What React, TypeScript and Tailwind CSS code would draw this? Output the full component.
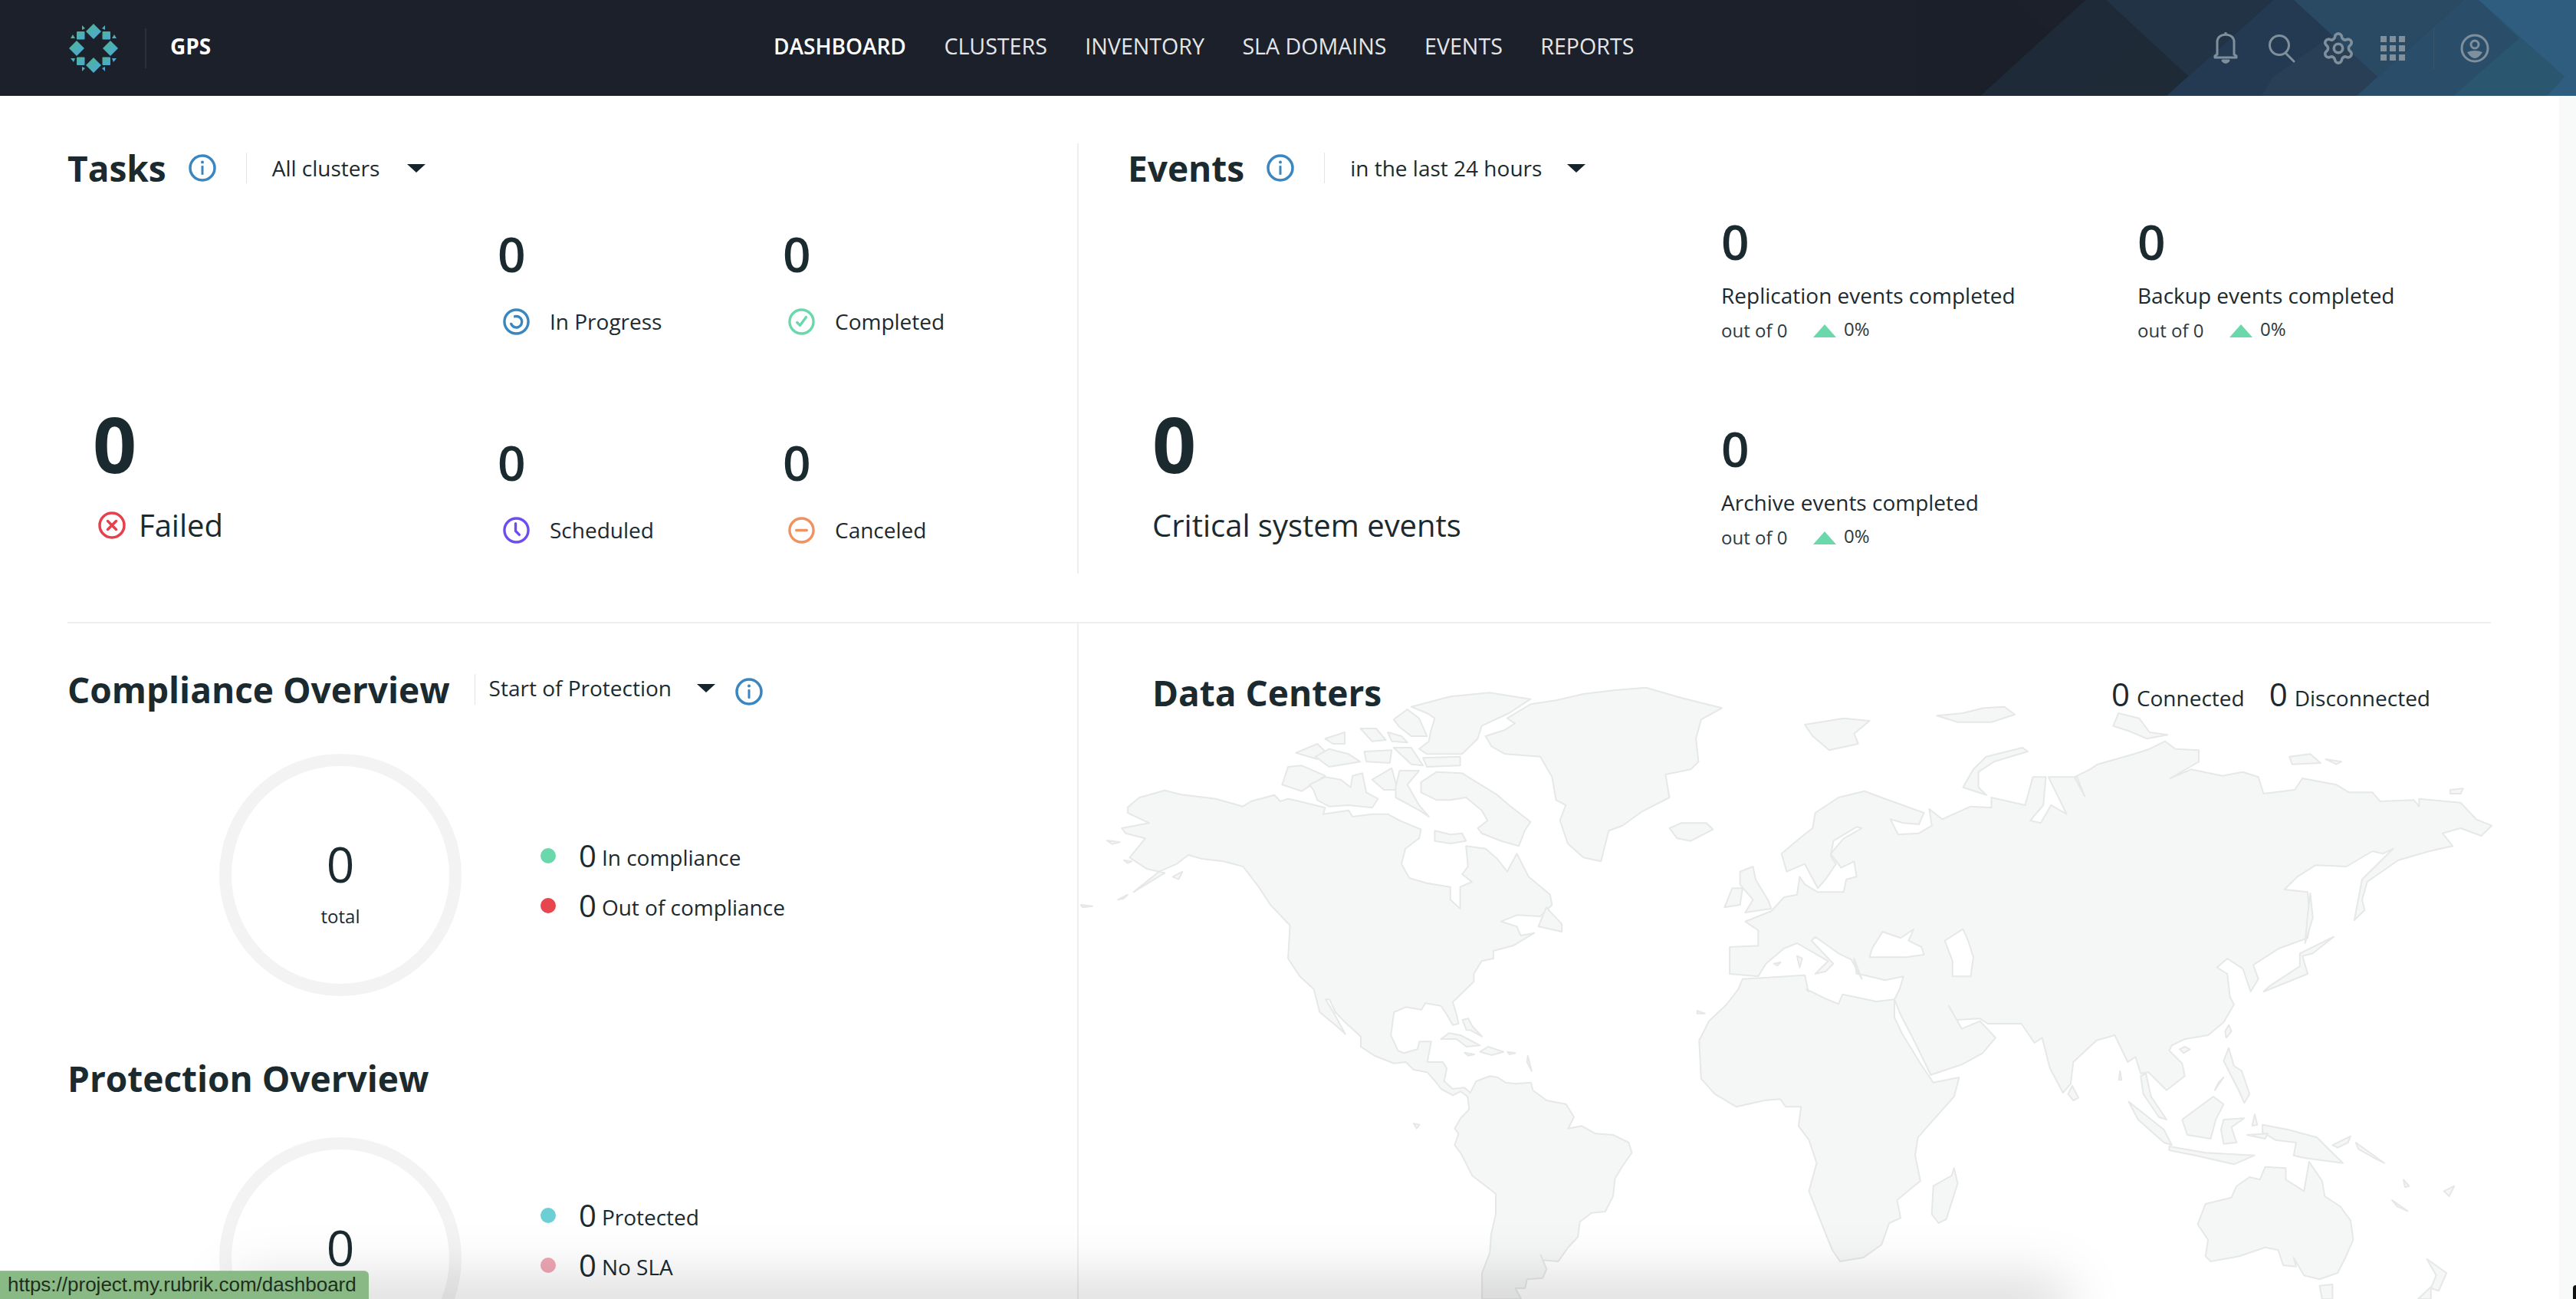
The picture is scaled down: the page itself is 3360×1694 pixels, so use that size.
import React from 'react';
import { Settings } from 'lucide-react';

// coastline points, traced per map quadrant: [left, top, x scale]
const QUADRANTS: { [key: string]: number[] } = {
  A: [1400, 880, 1.96],
  B: [2200, 880, 1.479],
  C: [1500, 1290, 1.96],
  D: [2300, 1290, 1.479],
};

const toPath = (shape: string) => {
  const points = shape.split('|').flatMap((part) => {
    const [left, top, sx] = QUADRANTS[part.trim()[0]];
    return part
      .trim()
      .slice(2)
      .trim()
      .split(/\s+/)
      .map((p) => {
        const [x, y] = p.split(',').map(Number);
        return `${(left + x / sx).toFixed(1)},${(top + y / 3).toFixed(1)}`;
      });
  });
  return `M${points.join(' L')} Z`;
};

const LAND = [
  // north and south america
  'A:135,518 165,480 230,452 270,468 360,485 430,515 450,495 510,470 525,495 545,485 560,490 640,520 635,545 700,530 710,555 760,545 800,545 830,570 885,605 880,640 845,680 835,740 855,795 900,815 960,830 960,880 985,915 985,830 1015,810 990,780 1005,750 1000,670 1050,680 1080,720 1105,770 1130,700 1160,790 1215,860 1220,900 1190,945 1130,940 1090,965 1130,985 1140,1020 1175,1010 1120,1060 1070,1080 1070,1110 1040,1120 1020,1170 1020,1200 980,1260 | C:770,50 780,100 785,135 770,140 755,100 740,65 700,55 690,80 650,70 620,90 612,180 630,240 645,250 680,235 685,205 715,205 705,285 745,285 755,310 748,360 770,390 800,385 815,405 830,360 865,340 885,345 905,365 930,370 970,365 975,395 1010,435 1060,450 1080,500 1065,545 1100,535 1135,565 1180,570 1220,600 1228,640 1205,690 1185,740 1180,810 1160,870 1125,875 1095,910 1090,970 1065,1010 1040,1065 1000,1060 995,1040 1010,1095 1000,1130 960,1135 955,1170 930,1170 945,1212 845,1212 845,1110 865,1030 868,960 880,880 880,800 820,730 790,640 775,610 785,565 775,545 790,505 812,470 808,420 790,400 770,415 740,390 725,360 705,325 670,315 650,285 620,290 570,260 535,225 535,185 495,130 470,90 455,40 445,40 465,90 495,175 470,140 430,90 415,0 | A:575,1180 545,1110 550,980 500,900 470,830 430,750 380,730 325,720 290,705 260,740 215,770 150,850 230,775 185,760 140,715 180,640 130,620 120,600 190,580 135,540',
  // greenland, iceland
  'A:1050,240 1100,215 1125,190 1105,170 1165,115 1230,100 1300,75 1380,60 1460,50 1550,90 | B:65,130 25,175 15,250 20,340 5,370 | A:1510,390 1520,480 1450,535 1400,590 1365,610 1345,730 1300,715 1260,660 1240,570 1255,510 1230,490 1220,400 1190,320 1100,310 1065,280',
  'A:1520,600 1550,580 | B:35,580 48,605 5,650 | A:1540,640',
  // arctic canada
  'A:885,420 925,380 990,385 1080,470 1110,510 1165,575 1150,610 1135,670 1090,650 1040,620 1030,600 1055,570 1040,530 1000,480 960,490 925,490 885,460',
  'A:545,360 580,355 640,395 580,455 530,430',
  'A:600,430 640,400 680,410 705,440 710,395 735,385 745,460 775,485 760,520 700,510 650,515 620,490 610,450',
  'A:760,410 810,365 825,450 790,450',
  'A:830,375 880,375 850,430 880,510 905,555 880,530 820,480 820,440',
  'A:565,305 620,270 640,300 620,330',
  'A:615,320 650,290 700,310 730,340 650,360',
  'A:740,300 810,295 805,345 745,340',
  'A:640,250 690,225 690,270 660,270',
  'A:730,210 770,210 795,255 760,260',
  'A:800,225 835,240 850,265 810,260',
  'A:815,285 860,285 890,355 860,350',
  'A:890,325 985,320 985,355 900,360',
  'A:860,125 960,85 1060,70 1165,95 1110,150 1040,200 1030,250 990,310 900,310 880,290 905,260 910,220 920,170 900,150',
  'A:815,175 850,135 880,170 900,240 860,240 830,205',
  'A:960,625 990,620 1000,650 960,660 920,650 920,610',
  'A:1205,910 1245,975 1245,1005 1185,985',
  // small islands of the americas
  'A:15,900 45,905 20,910',
  'A:110,880 135,860 125,875',
  'A:250,790 275,770 265,800',
  'A:82,648 115,655 95,662',
  'A:125,725 145,730 135,737',
  'C:740,195 760,172 790,180 840,220 805,225 780,195',
  'C:840,245 860,225 900,245 870,258',
  'C:800,248 825,255 810,260',
  'C:910,245 930,250 915,255',
  'C:795,120 810,115 820,145 845,185 815,160 805,160',
  'C:962,260 972,320 960,285',
  'C:670,525 685,530 678,545',
  'C:1395,85 1415,95 1395,95',
  // arctic russia and europe
  'B:225,195 300,170 350,180 320,230 328,270 272,295 240,240',
  'B:480,160 530,150 570,130 610,125 630,155 585,185 520,185',
  'B:645,285 655,300 590,340 560,380 560,440 575,470 530,440 550,370 575,320',
  'B:830,150 870,170 890,225 925,235 885,250 850,220 820,200',
  'B:1160,320 1200,310 1220,345 1165,350',
  'B:1230,330 1260,340 1250,350',
  'B:1470,450 1495,445 1490,465 1470,465',
  'B:125,750 130,800 155,885 160,915 110,930 125,880 100,820 100,770',
  'B:85,835 105,835 100,900 70,910',
  // eurasia
  'B:80,1065 135,1060 135,1000 110,965 160,925 185,870 210,860 215,790 225,820 250,850 300,850 305,800 325,790 320,730 295,755 275,700 300,640 335,600 325,595 280,650 275,710 285,740 265,800 250,835 225,740 190,770 180,700 215,640 240,600 245,540 290,480 340,455 380,485 455,540 445,585 415,580 390,565 405,625 445,620 470,590 465,525 490,565 545,515 585,520 585,480 650,510 665,400 690,400 685,510 660,570 680,580 700,510 730,545 695,400 750,400 765,475 745,400 775,370 790,350 860,310 890,290 920,260 940,290 985,295 985,340 930,405 970,370 1030,395 1070,380 1100,400 1110,465 1170,450 1185,405 1250,430 1275,460 1320,460 1335,495 1400,490 1410,515 1410,485 1490,500 1520,565 1550,590 1530,630 1490,600 1455,620 1475,670 1430,690 1370,725 1310,810 1300,880 1305,920 1285,960 1300,800 1360,680 1340,700 1320,690 1270,750 1210,745 1175,790 1150,840 1195,850 1200,960 1195,1030 1140,1070 1090,1135 1100,1190 1085,1240 1070,1150 1040,1110 1020,1145 1040,1170 1045,1260 | D:905,60 885,130 855,180 810,195 785,220 780,240 805,290 810,340 775,395 740,325 725,330 715,265 700,285 675,180 640,200 595,285 590,370 575,405 550,310 535,190 520,210 495,135 430,135 415,115 370,120 355,65 380,155 415,125 445,190 420,250 380,295 320,335 290,210 262,100 250,40 260,0 | B:415,1180 380,1195 340,1175 325,1170 320,1110 335,1190 315,1115 290,1090 245,1025 238,1040 280,1130 265,1160 245,1170 270,1120 210,1050 185,1070 150,1130 135,1180 80,1170',
  'B:1200,855 1205,950 1190,1050 1195,940',
  'B:1245,1025 1205,1090 1185,1100 1195,1170 1110,1240 1120,1220 1180,1140 1180,1090',
  'B:210,1100 220,1110 215,1145',
  'B:165,1130 178,1125 172,1138',
  // africa
  'B:105,1190 225,1175 232,1240 | D:80,0 120,40 142,58 150,20 215,48 250,40 250,110 265,175 300,290 325,365 375,345 365,420 330,500 295,580 290,650 300,750 255,825 262,895 240,915 225,1000 190,1050 145,1065 130,1020 110,920 85,790 100,680 85,590 65,535 70,460 40,460 30,430 0,435 | C:1495,460 1440,410 1405,350 1400,200 1425,125 1470,60 1500,0',
  'D:365,700 372,760 350,900 335,915 322,880 325,770 360,730',
  // south east asia and oceania
  'D:593,378 605,425 595,435 585,410',
  'D:685,320 688,355 683,355',
  'D:895,140 900,165 890,190 888,165',
  'D:810,225 820,235 808,250 800,235',
  'D:895,230 905,300 920,320 935,410 925,445 915,400 895,320 885,280',
  'D:885,345 868,395 875,365',
  'D:865,420 885,450 870,510 860,585 815,570 805,510 825,480',
  'D:735,330 745,420 775,510 760,500 730,410 725,340',
  'D:702,440 770,550 785,610 770,600 720,510',
  'D:780,615 850,640 945,650 905,685 830,650 780,630',
  'D:885,510 925,505 900,540 910,600 885,605 880,550',
  'D:960,530 1010,550 1065,580 1085,620 1115,680 1040,660 1020,650 1025,600 985,590 960,560',
  'D:945,490 950,530 940,535',
  'D:930,570 970,565 965,585',
  'D:1140,600 1195,680 1175,660 1145,625',
  'D:1095,610 1130,575 1125,600 1105,620',
  'D:1210,825 1240,868 1220,850',
  'D:1232,745 1243,770 1235,775',
  'D:1310,790 1330,770 1320,810',
  'D:850,840 900,815 910,770 935,735 955,745 965,695 1005,700 1005,745 1040,790 1050,675 1075,750 1080,810 1110,850 1130,905 1135,980 1120,1050 1105,1110 1070,1135 1040,1120 1020,1050 1025,1085 1000,1080 990,1020 965,1010 915,1045 860,1065 850,1045 855,980 835,920',
  'D:1070,1160 1095,1155 1095,1212 1075,1212',
  'D:1277,1055 1315,1110 1300,1180 1285,1170 1295,1120',
  'D:1285,1165 1260,1212 1285,1212',
];

// inland seas, painted over the land
const WATER = [
  'B:355,1070 375,1005 410,1030 435,995 425,1040 450,1065 455,1095 420,1105 350,1105',
  'B:495,1040 530,995 540,1040 550,1105 545,1180 510,1180 510,1120',
];

const Info = ({ className }: { className: string }) => (
  <svg viewBox="0 0 36 36" className={className} fill="none">
    <circle cx="18" cy="18" r="16" stroke="#3a86c0" strokeWidth="3.5" />
    <circle cx="18" cy="10.5" r="2" fill="#3a86c0" />
    <rect x="16.5" y="15" width="3" height="12" rx="1" fill="#3a86c0" />
  </svg>
);

const Caret = () => <div className="w-0 h-0 border-x-[12px] border-x-transparent border-t-[11px] border-t-[#14242a]" />;

const StatusIcon = ({ kind, size }: { kind: string; size: string }) => {
  const color: { [k: string]: string } = {
    progress: '#3a86c0',
    done: '#6bd8ac',
    failed: '#e5404c',
    scheduled: '#6d4df2',
    canceled: '#f0925f',
  };
  const c = color[kind];
  return (
    <svg viewBox="0 0 36 36" className={size} fill="none" stroke={c} strokeWidth="3.5" strokeLinecap="round" strokeLinejoin="round">
      <circle cx="18" cy="18" r="16" />
      {kind === 'progress' && <path d="M16 11 A7.5 7.5 0 1 1 11 21" />}
      {kind === 'done' && <path d="M12 19 L16 23 L24 12" />}
      {kind === 'failed' && <path d="M12.5 12.5 L23.5 23.5 M23.5 12.5 L12.5 23.5" />}
      {kind === 'scheduled' && <path d="M17 9 L17 19 L22 24" />}
      {kind === 'canceled' && <path d="M11 18 L25 18" />}
    </svg>
  );
};

const TaskStat = ({ label, kind }: { label: string; kind: string }) => (
  <div className="w-[372px] h-[127px]">
    <div className="text-[64px] leading-[64px] font-semibold">0</div>
    <div className="flex items-center gap-[26px] mt-[38px] ml-[7px] text-[28px] leading-[36px]">
      <StatusIcon kind={kind} size="w-[35px] h-[35px]" />
      <span>{label}</span>
    </div>
  </div>
);

const EventStat = ({ label }: { label: string }) => (
  <div className="h-[170px]">
    <div className="text-[64px] leading-[64px] font-semibold">0</div>
    <div className="text-[28px] leading-[36px] mt-[20px]">{label}</div>
    <div className="flex items-center text-[24px] leading-[30px] mt-[13px] text-[#2b3a3f]">
      <span className="w-[120px]">out of 0</span>
      <div className="w-0 h-0 border-x-[15px] border-x-transparent border-b-[17px] border-b-[#6bd8ac]" />
      <span className="ml-[10px] -mt-[4px]">0%</span>
    </div>
  </div>
);

const Donut = ({ children }: { children?: React.ReactNode }) => (
  <div className="w-[316px] h-[316px] rounded-full border-[16px] border-[#f3f3f3] shrink-0 flex flex-col items-center">{children}</div>
);

const Legend = ({ color, label }: { color: string; label: string }) => (
  <div className="flex items-center h-[65px]">
    <div className="w-[20px] h-[20px] rounded-full" style={{ backgroundColor: color }} />
    <span className="ml-[30px] text-[40px] leading-[40px] font-medium">0</span>
    <span className="ml-[7px] mt-[4px] text-[28px] leading-[40px]">{label}</span>
  </div>
);

const Logo = () => (
  <svg viewBox="0 0 66 66" className="w-[66px] h-[66px]">
    <defs>
      <linearGradient id="logo" x1="0" y1="0" x2="1" y2="1">
        <stop offset="0" stopColor="#4fb58e" />
        <stop offset="1" stopColor="#4aa8e0" />
      </linearGradient>
    </defs>
    <g fill="url(#logo)">
      <path d="M33 1 L43 11 L33 21 L23 11 Z" />
      <path d="M33 45 L43 55 L33 65 L23 55 Z" />
      <path d="M11 23 L21 33 L11 43 L1 33 Z" />
      <path d="M55 23 L65 33 L55 43 L45 33 Z" />
      <rect x="11" y="11" width="10.5" height="10.5" rx="1" />
      <rect x="44.5" y="11" width="10.5" height="10.5" rx="1" />
      <rect x="11" y="44.5" width="10.5" height="10.5" rx="1" />
      <rect x="44.5" y="44.5" width="10.5" height="10.5" rx="1" />
      <path d="M18 3 L18 9 L22 7 Z M48 3 L48 9 L44 7 Z M18 63 L18 57 L22 59 Z M48 63 L48 57 L44 59 Z" />
      <path d="M3 20 L9 20 L6 15 Z M63 20 L57 20 L60 15 Z M3 46 L9 46 L7 51 Z M63 46 L57 46 L59 51 Z" />
    </g>
  </svg>
);

const HeaderArt = () => (
  <svg viewBox="0 0 860 125" preserveAspectRatio="none" className="absolute top-0 right-0 w-[860px] h-[125px]">
    <polygon points="125,0 172,42 83,125 0,125 0,0" fill="#1a1f29" />
    <polygon points="220,0 860,0 860,125 83,125" fill="#1e2a37" />
    <polygon points="247,0 293,45 203,125 860,125 860,0" fill="#1f2e3b" />
    <polygon points="247,0 357,102 326,125 203,125 293,45" fill="#1e2b36" />
    <polygon points="247,0 465,0 326,125 357,102" fill="#213344" />
    <polygon points="465,0 860,0 860,125 326,125" fill="#233a52" />
    <polygon points="492,0 603,102 574,125 450,125 465,100 550,40" fill="#283f55" />
    <polygon points="492,0 713,0 574,125 603,102" fill="#2a4a63" />
    <polygon points="713,0 860,0 860,125 574,125" fill="#2a4e69" />
    <polygon points="733,0 845,100 822,125 700,125 786,50" fill="#2b566f" />
    <polygon points="733,0 860,0 860,90 845,100" fill="#2f5d80" />
    <polygon points="845,100 860,85 860,125 822,125" fill="#2f5d80" />
  </svg>
);

export default function App() {
  return (
    <div className="relative w-[3360px] h-[1694px] overflow-hidden bg-white text-[#1b2a2f] font-['Open_Sans',sans-serif]">
      <header className="relative h-[125px] bg-[#1b202b] flex items-center pb-[5px]">
        <HeaderArt />
        <div className="relative flex items-center pl-[89px] w-[1009px] mt-[5px]">
          <Logo />
          <div className="w-[2px] h-[52px] bg-[#2b3039] ml-[34px]" />
          <span className="ml-[31px] -mt-[5px] text-[28px] font-bold text-white">GPS</span>
        </div>
        <nav className="relative flex gap-[49.5px] text-[28.6px] font-medium text-[#e4e6e8] uppercase">
          <span className="font-semibold text-white text-[28px]">Dashboard</span>
          <span>Clusters</span>
          <span>Inventory</span>
          <span>SLA Domains</span>
          <span>Events</span>
          <span>Reports</span>
        </nav>
        <div className="absolute top-0 left-[2887px] h-[125px] flex items-center text-[#7f8f9b]">
          <svg viewBox="0 0 32 44" className="w-[32px] h-[44px]" fill="none" stroke="currentColor" strokeWidth="3" strokeLinejoin="round">
            <path d="M2 32 L5 30 L5 14 Q5 5 16 4 Q27 5 27 14 L27 30 L30 32 L30 34 L2 34 Z" />
            <path d="M16 1 L16 4" />
            <path d="M12 38 Q16 43 20 38 Z" fill="currentColor" />
          </svg>
          <svg viewBox="0 0 36 38" className="w-[36px] h-[38px] ml-[39px]" fill="none" stroke="currentColor" strokeWidth="3" strokeLinecap="round">
            <circle cx="15" cy="15" r="12.5" />
            <path d="M23 25 L34 36" />
          </svg>
          <Settings className="w-[46px] h-[48px] ml-[33px]" strokeWidth={1.9} />
          <div className="grid grid-cols-3 gap-[4px] ml-[32px]">
            {Array.from({ length: 9 }).map((_, i) => (
              <div key={i} className="w-[8px] h-[8px] bg-current" />
            ))}
          </div>
          <div className="w-[1px] h-[54px] bg-[#3b556b] ml-[37px]" />
          <svg viewBox="0 0 38 38" className="w-[38px] h-[38px] ml-[34px]" fill="none" stroke="currentColor" strokeWidth="3">
            <circle cx="19" cy="19" r="17" />
            <circle cx="19" cy="14" r="5" />
            <path d="M9 24 Q19 20 29 24 Q24 32 19 32 Q14 32 9 24 Z" fill="currentColor" stroke="none" />
          </svg>
        </div>
      </header>

      <main className="pl-[88px] pr-[111px]">
        <section className="flex h-[688px] pt-[60px] border-b-2 border-[#eeeeee]">
          <div className="w-[1317px] shrink-0">
            <div className="flex items-center h-[68px]">
              <h2 className="text-[46px] font-bold leading-[60px]">Tasks</h2>
              <Info className="w-[36px] h-[36px] ml-[29px]" />
              <div className="w-[1px] h-[40px] bg-[#e4e4e4] ml-[39px]" />
              <span className="ml-[33px] text-[28px]">All clusters</span>
              <div className="ml-[36px]"><Caret /></div>
            </div>
            <div className="flex">
              <div className="w-[561px] pl-[33px] pt-[275px]">
                <div className="text-[100px] leading-[100px] font-bold">0</div>
                <div className="flex items-center mt-[30px] ml-[7px] gap-[17px]">
                  <StatusIcon kind="failed" size="w-[36px] h-[36px]" />
                  <span className="text-[40px] leading-[54px]">Failed</span>
                </div>
              </div>
              <div className="flex flex-wrap content-start w-[744px] pt-[46px] gap-y-[145px]">
                <TaskStat label="In Progress" kind="progress" />
                <TaskStat label="Completed" kind="done" />
                <TaskStat label="Scheduled" kind="scheduled" />
                <TaskStat label="Canceled" kind="canceled" />
              </div>
            </div>
          </div>
          <div className="flex-1 h-[561px] mt-[2px] border-l-2 border-[#eeeeee] pl-[64px]">
            <div className="flex items-center h-[68px] -mt-[2px]">
              <h2 className="text-[46px] font-bold leading-[60px]">Events</h2>
              <Info className="w-[36px] h-[36px] ml-[29px]" />
              <div className="w-[1px] h-[40px] bg-[#e4e4e4] ml-[39px]" />
              <span className="ml-[33px] text-[28px]">in the last 24 hours</span>
              <div className="ml-[33px]"><Caret /></div>
            </div>
            <div className="flex">
              <div className="w-[774px] pl-[32px] pt-[275px]">
                <div className="text-[100px] leading-[100px] font-bold">0</div>
                <div className="text-[40px] leading-[54px] mt-[30px]">Critical system events</div>
              </div>
              <div className="grid grid-cols-[543px_1fr] content-start flex-1 pt-[30px] gap-y-[100px]">
                <EventStat label="Replication events completed" />
                <EventStat label="Backup events completed" />
                <EventStat label="Archive events completed" />
              </div>
            </div>
          </div>
        </section>

        <section className="flex h-[882px]">
          <div className="w-[1317px] shrink-0 pt-[52px]">
            <div className="flex items-center h-[68px]">
              <h2 className="text-[46px] font-bold leading-[60px]">Compliance Overview</h2>
              <div className="w-[1px] h-[40px] bg-[#e4e4e4] ml-[32px]" />
              <span className="ml-[18px] -mt-[4px] text-[28px]">Start of Protection</span>
              <div className="ml-[33px] -mt-[4px]"><Caret /></div>
              <Info className="w-[36px] h-[36px] ml-[26px] mt-[6px]" />
            </div>
            <div className="flex items-start mt-[50px] pl-[198px]">
              <Donut>
                <div className="text-[64px] leading-[64px] mt-[96px]">0</div>
                <div className="text-[24px] leading-[32px] mt-[20px]">total</div>
              </Donut>
              <div className="ml-[103px] mt-[100px]">
                <Legend color="#6bd8ac" label="In compliance" />
                <Legend color="#e8464f" label="Out of compliance" />
              </div>
            </div>
            <h2 className="text-[46px] font-bold leading-[60px] mt-[77px]">Protection Overview</h2>
            <div className="flex items-start mt-[47px] pl-[198px]">
              <Donut>
                <div className="text-[64px] leading-[64px] mt-[96px]">0</div>
              </Donut>
              <div className="ml-[103px] mt-[69px]">
                <Legend color="#6dcfd6" label="Protected" />
                <Legend color="#f0a6b4" label="No SLA" />
              </div>
            </div>
          </div>
          <div className="relative flex-1 border-l-2 border-[#eeeeee]">
            <svg viewBox="1405 813 1955 881" className="absolute top-0 left-0 w-[1955px] h-[881px]">
              {LAND.map((s, i) => (
                <path key={i} d={toPath(s)} fill="#f5f6f6" stroke="#e6e8e8" strokeWidth="2" strokeLinejoin="round" />
              ))}
              {WATER.map((s, i) => (
                <path key={i} d={toPath(s)} fill="#ffffff" stroke="#e6e8e8" strokeWidth="2" strokeLinejoin="round" />
              ))}
            </svg>
            <div className="relative flex items-center justify-between pl-[96px] pr-[79px] pt-[60px]">
              <h2 className="text-[46px] font-bold leading-[60px]">Data Centers</h2>
              <div className="flex items-baseline text-[28px] mt-[4px]">
                <span className="text-[42px] leading-[56px] font-medium">0</span>
                <span className="ml-[9px]">Connected</span>
                <span className="text-[42px] leading-[56px] font-medium ml-[32px]">0</span>
                <span className="ml-[9px]">Disconnected</span>
              </div>
            </div>
          </div>
        </section>
      </main>

      <div className="absolute right-0 top-[125px] bottom-0 w-[22px] bg-[#f8fafa]" />
      <div className="absolute right-0 bottom-0 w-[4px] h-[18px] bg-[#111111] rounded-tl-full" />
      <div className="absolute left-[300px] bottom-[-45px] w-[2400px] h-[70px] rounded-full bg-black/15 blur-[35px]" />
      <div className="absolute left-0 bottom-0 w-[481px] h-[37px] bg-[#89b984] border-t border-[#b5b5b5] rounded-tr-[6px] pl-[10px] text-[26px] leading-[35px] text-[#1e2e1e] font-['Liberation_Sans',sans-serif]">
        https://project.my.rubrik.com/dashboard
      </div>
    </div>
  );
}
